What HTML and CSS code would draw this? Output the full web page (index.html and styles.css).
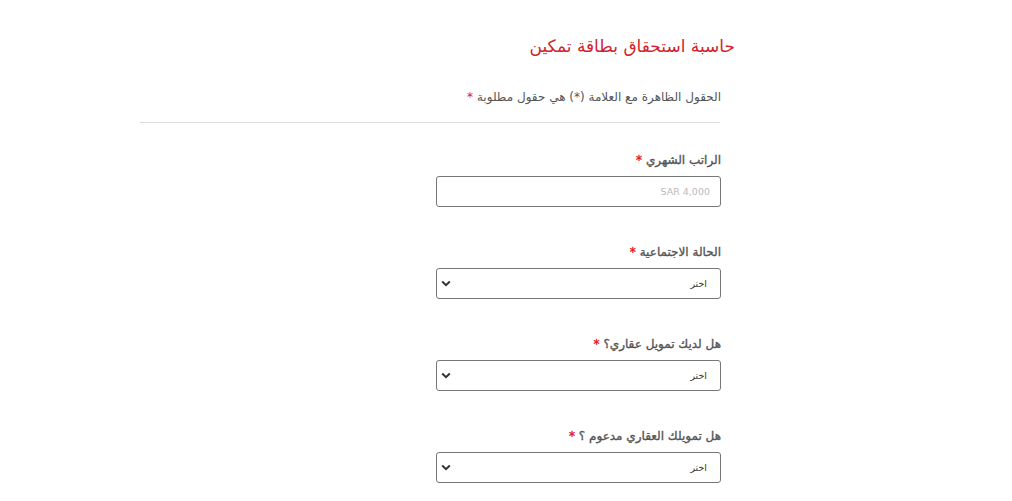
FILE: index.html
```html
<!DOCTYPE html>
<html lang="ar" dir="rtl">

<head>
    <meta charset="UTF-8">
    <meta name="viewport" content="width=device-width, initial-scale=1.0">
    <title>حاسبة استحقاق بطاقة تمكين</title>
    <link rel="stylesheet" href="styles.css">
</head>

<body>
    <main class="calculator">
        <h1 class="calc-title">حاسبة استحقاق بطاقة تمكين</h1>
        <div class="calc-body">
            <p class="required-note">الحقول الظاهرة مع العلامة (*) هي حقول مطلوبة <span class="star">*</span></p>
            <hr class="divider">

            <form class="calc-form">
                <div class="field">
                    <label for="salary">الراتب الشهري <span class="star">*</span></label>
                    <input type="text" id="salary" placeholder="SAR 4,000">
                </div>

                <div class="field">
                    <label for="status">الحالة الاجتماعية <span class="star">*</span></label>
                    <div class="select-wrap">
                        <select id="status">
                            <option>اختر</option>
                        </select>
                        <svg class="chevron" width="10" height="7" viewBox="0 0 10 7">
                            <path d="M1.2 1.5 L5 5.2 L8.8 1.5" fill="none" stroke="#333" stroke-width="2" />
                        </svg>
                    </div>
                </div>

                <div class="field">
                    <label for="mortgage">هل لديك تمويل عقاري؟ <span class="star">*</span></label>
                    <div class="select-wrap">
                        <select id="mortgage">
                            <option>اختر</option>
                        </select>
                        <svg class="chevron" width="10" height="7" viewBox="0 0 10 7">
                            <path d="M1.2 1.5 L5 5.2 L8.8 1.5" fill="none" stroke="#333" stroke-width="2" />
                        </svg>
                    </div>
                </div>

                <div class="field">
                    <label for="supported">هل تمويلك العقاري مدعوم ؟ <span class="star">*</span></label>
                    <div class="select-wrap">
                        <select id="supported">
                            <option>اختر</option>
                        </select>
                        <svg class="chevron" width="10" height="7" viewBox="0 0 10 7">
                            <path d="M1.2 1.5 L5 5.2 L8.8 1.5" fill="none" stroke="#333" stroke-width="2" />
                        </svg>
                    </div>
                </div>
            </form>
        </div>
    </main>
</body>

</html>
```

FILE: styles.css
```css
body {
    margin: 0;
    font-family: "DejaVu Sans", "Noto Sans", sans-serif;
    background: #fff;
    color: #444;
}

.calculator {
    width: 595px;
    margin-right: 277px;
    padding-top: 34px;
}

.calc-title {
    margin: 0;
    font-size: 17px;
    font-weight: normal;
    color: #d2232a;
    line-height: 24px;
}

.calc-body {
    margin-right: 14px;
}

.required-note {
    margin: 30px 0 0 0;
    font-size: 12px;
    line-height: 18px;
    color: #555;
}

.star {
    color: #e0141e;
}

.divider {
    border: none;
    border-top: 1px solid #dcdcdc;
    margin: 16px 1px 0 0;
}

.calc-form {
    padding-top: 28px;
}

.field {
    width: 285px;
    margin-bottom: 36px;
}

.field label {
    display: block;
    font-size: 12px;
    font-weight: normal;
    line-height: 18px;
    color: #555;
    margin-bottom: 7px;
    -webkit-text-stroke: 0.35px #555;
}

.field label .star {
    -webkit-text-stroke: 0.35px #e0141e;
}

.field input,
.field select {
    display: block;
    box-sizing: border-box;
    width: 285px;
    height: 31px;
    border: 1px solid #777;
    border-radius: 3px;
    background: #fff;
    font-family: "DejaVu Sans", sans-serif;
    font-size: 9.5px;
    padding: 0 10px;
    color: #333;
}

.field input::placeholder {
    color: #bbb;
}

.select-wrap {
    position: relative;
}

.field select {
    appearance: none;
    -webkit-appearance: none;
    padding-right: 13px;
}

.chevron {
    position: absolute;
    left: 5px;
    top: 12px;
    pointer-events: none;
}
```
